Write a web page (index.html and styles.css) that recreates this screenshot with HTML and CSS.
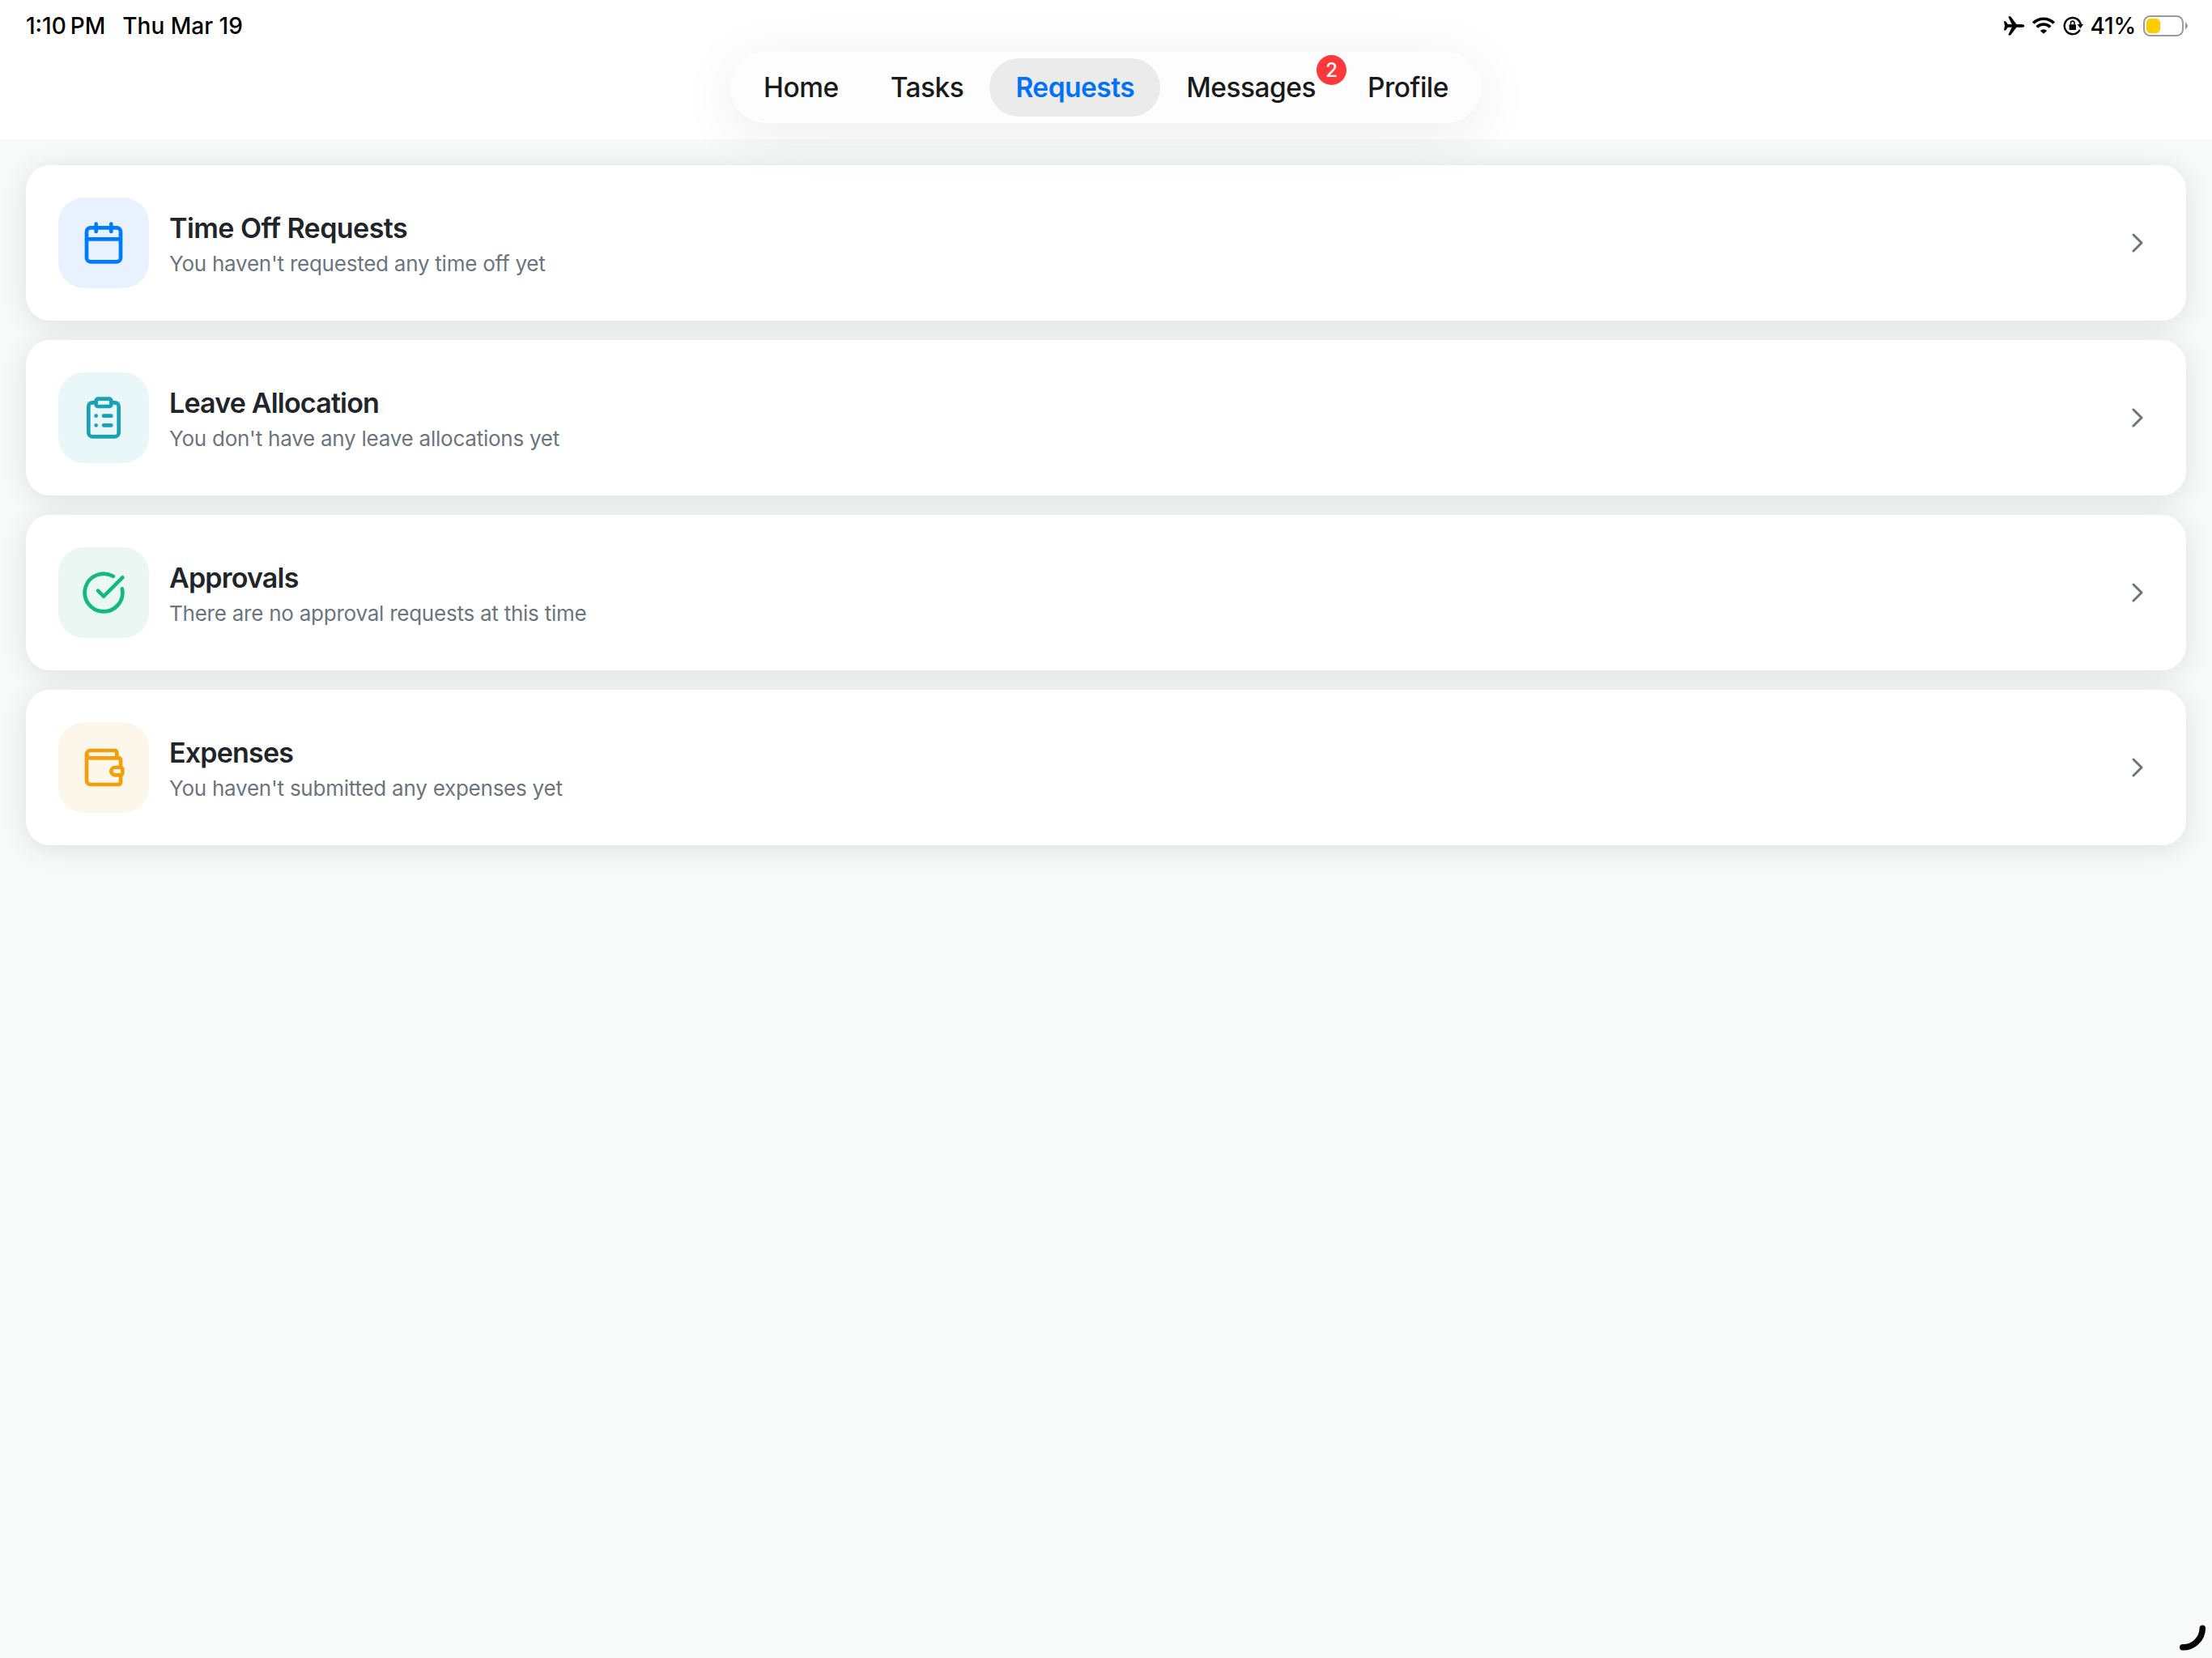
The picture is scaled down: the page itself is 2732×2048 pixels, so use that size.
FILE: index.html
```html
<!DOCTYPE html>
<html lang="en">

<head>
    <meta charset="UTF-8">
    <meta name="viewport" content="width=device-width, initial-scale=1.0">
    <title>Requests</title>
    <link rel="stylesheet" href="styles.css">
</head>

<body>

    <header class="header">
        <div class="status-bar">
            <div class="status-left">
                <span class="time">1:10<span class="ampm">PM</span></span>
                <span class="date">Thu Mar 19</span>
            </div>
            <div class="status-right">
                <svg class="plane" width="26" height="24" viewBox="0 0 26 24">
                    <path d="M0 6.2h1.6c.4 0 .7.1.9.5L4.8 10h5L5.600 1.200C5.300.6 5.600.2 6.200.2h1.300c.5 0 .8.2 1.100.6L15.600 10h6.400c1.800 0 3.400 1 3.400 1.900s-1.600 1.900-3.400 1.900h-6.400l-7 9.100c-.3.4-.6.6-1.100.6H6.200c-.6 0-.9-.4-.6-1L9.800 13.800h-5L2.500 17.100c-.2.4-.5.5-.9.5H0l1-5.700z" />
                </svg>
                <svg class="wifi" width="30" height="22" viewBox="0 0 30 22">
                    <path class="wave" d="M2.200 7.600a18 18 0 0 1 25.600 0M6.700 12.400a11.700 11.700 0 0 1 16.600 0" />
                    <path d="M15 20.700l-4.200-3.800a6 6 0 0 1 8.400 0z" />
                </svg>
                <svg class="lock" width="26" height="24" viewBox="0 0 26 24">
                    <path class="ring" d="M20.300 17.600A10.100 10.100 0 1 1 21.800 10.500" />
                    <path d="M17.600 10h7.600l-3.800 5z" />
                    <rect x="7.600" y="10.300" width="8.400" height="6.600" rx="1" />
                    <path class="shackle" d="M9.500 10.500V8.400a2.300 2.300 0 0 1 4.600 0v2.100" />
                </svg>
                <span class="percent">41%</span>
                <svg class="battery" width="56" height="26" viewBox="0 0 56 26">
                    <rect class="shell" x="1" y="1" width="48" height="24" rx="7.500" />
                    <rect class="level" x="4" y="4" width="17" height="18" rx="5" />
                    <path class="tip" d="M52 8.800c1.800.7 3 2.400 3 4.200s-1.200 3.500-3 4.200z" />
                </svg>
            </div>
        </div>

        <nav class="tabs">
            <a class="tab">Home</a>
            <a class="tab">Tasks</a>
            <a class="tab active">Requests</a>
            <a class="tab">Messages<span class="badge">2</span></a>
            <a class="tab">Profile</a>
        </nav>
    </header>

    <main class="list">
        <div class="card">
            <div class="icon blue">
                <svg viewBox="0 0 24 24">
                    <path d="M8 2v4M16 2v4M3 10h18" />
                    <rect x="3" y="4" width="18" height="18" rx="2" />
                </svg>
            </div>
            <div class="text">
                <h2 class="wide">Time Off Requests</h2>
                <p>You haven't requested any time off yet</p>
            </div>
            <svg class="chevron" viewBox="0 0 24 24"><path d="m9 18 6-6-6-6" /></svg>
        </div>

        <div class="card">
            <div class="icon teal">
                <svg viewBox="0 0 24 24">
                    <rect x="8" y="2" width="8" height="4" rx="1" />
                    <path d="M16 4h2a2 2 0 0 1 2 2v14a2 2 0 0 1-2 2H6a2 2 0 0 1-2-2V6a2 2 0 0 1 2-2h2" />
                    <path d="M12 11h4M12 16h4M8 11h.01M8 16h.01" />
                </svg>
            </div>
            <div class="text">
                <h2>Leave Allocation</h2>
                <p>You don't have any leave allocations yet</p>
            </div>
            <svg class="chevron" viewBox="0 0 24 24"><path d="m9 18 6-6-6-6" /></svg>
        </div>

        <div class="card">
            <div class="icon green">
                <svg viewBox="0 0 24 24">
                    <path d="M21.801 10A10 10 0 1 1 17 3.335" />
                    <path d="m9 11 3 3L22 4" />
                </svg>
            </div>
            <div class="text">
                <h2>Approvals</h2>
                <p>There are no approval requests at this time</p>
            </div>
            <svg class="chevron" viewBox="0 0 24 24"><path d="m9 18 6-6-6-6" /></svg>
        </div>

        <div class="card">
            <div class="icon orange">
                <svg viewBox="0 0 24 24">
                    <path d="M19 7V4a1 1 0 0 0-1-1H5a2 2 0 0 0 0 4h15a1 1 0 0 1 1 1v4h-3a2 2 0 0 0 0 4h3a1 1 0 0 0 1-1v-2a1 1 0 0 0-1-1" />
                    <path d="M3 5v14a2 2 0 0 0 2 2h15a1 1 0 0 0 1-1v-4" />
                </svg>
            </div>
            <div class="text">
                <h2>Expenses</h2>
                <p>You haven't submitted any expenses yet</p>
            </div>
            <svg class="chevron" viewBox="0 0 24 24"><path d="m9 18 6-6-6-6" /></svg>
        </div>
    </main>

    <svg class="corner" width="34" height="34" viewBox="0 0 34 34">
        <path d="M29.300 5.300A24 24 0 0 1 4.800 28.800" />
    </svg>

</body>

</html>
```
FILE: styles.css
```css
* {
    box-sizing: border-box;
}

body {
    margin: 0;
    height: 2048px;
    overflow: hidden;
    background-color: #f8faf9;
    font-family: Inter, "Liberation Sans", sans-serif;
}

.header {
    position: relative;
    z-index: 1;
    display: flex;
    flex-direction: column;
    align-items: center;
    height: 172px;
    background-color: #fff;
}

/* status bar */
.status-bar {
    display: flex;
    justify-content: space-between;
    width: 100%;
    height: 64px;
    padding: 0 29px 0 32px;
    font-size: 28px;
    font-weight: 500;
    line-height: 64px;
    color: #000;
}

.status-left,
.status-right {
    display: flex;
    align-items: center;
}

.status-left {
    gap: 21px;
}

.ampm {
    margin-left: 5px;
}

.wifi {
    margin-left: 8px;
}

.wave,
.ring,
.shackle {
    fill: none;
    stroke: #000;
}

.wave {
    stroke-width: 3.6;
}

.ring {
    stroke-width: 2.4;
    stroke-linecap: round;
}

.shackle {
    stroke-width: 1.5;
}

.lock {
    margin-left: 9px;
}

.percent {
    margin-left: 8px;
    letter-spacing: -0.2px;
}

.battery {
    margin-left: 9px;
}

.shell {
    fill: none;
    stroke: #9b9b9b;
    stroke-width: 2;
}

.level {
    fill: #ffcc00;
}

.tip {
    fill: #9b9b9b;
}

/* tab bar */
.tabs {
    display: flex;
    height: 88px;
    padding: 7px 8px;
    border: 1px solid #fff;
    border-radius: 44px;
    background-color: #fdfdfd;
    box-shadow: 0 12px 70px rgba(0, 0, 0, 0.08);
}

.tab {
    position: relative;
    padding: 0 32px;
    border-radius: 36px;
    font-size: 33.5px;
    font-weight: 500;
    line-height: 72px;
    letter-spacing: -0.5px;
    color: #1a1a1a;
}

.active {
    background-color: #ebebeb;
    font-weight: 600;
    color: #0071f8;
}

.badge {
    position: absolute;
    top: -4px;
    right: -6px;
    width: 37px;
    height: 37px;
    border-radius: 50%;
    background-color: #ff383c;
    font-size: 24px;
    line-height: 37px;
    text-align: center;
    letter-spacing: 0;
    color: #fff;
}

/* request cards */
.list {
    display: flex;
    flex-direction: column;
    gap: 24px;
    padding: 32px;
}

.card {
    display: flex;
    align-items: center;
    height: 192px;
    padding: 0 40px;
    border-radius: 30px;
    background-color: #fff;
    box-shadow: 0 4px 32px rgba(0, 0, 0, 0.11);
}

.icon {
    display: flex;
    align-items: center;
    justify-content: center;
    width: 112px;
    height: 112px;
    margin-right: 24px;
    border-radius: 32px;
}

.icon svg,
.chevron {
    fill: none;
    stroke: currentColor;
    stroke-width: 2;
    stroke-linecap: round;
    stroke-linejoin: round;
}

.icon svg {
    width: 56px;
    height: 56px;
}

.blue {
    background-color: #e8f2fe;
    color: #007bff;
}

.teal {
    background-color: #eaf7f8;
    color: #17a2b8;
}

.green {
    background-color: #eaf7f3;
    color: #14b881;
}

.orange {
    background-color: #fdf6ea;
    color: #f59e0b;
}

.text {
    flex: 1;
    padding: 3px 0 0 1px;
}

h2 {
    margin: 0;
    font-size: 34px;
    font-weight: 600;
    line-height: 44px;
    letter-spacing: -0.8px;
    color: #212529;
}

.wide {
    letter-spacing: -0.55px;
}

p {
    margin: 4px 0 0;
    font-size: 26px;
    line-height: 36px;
    letter-spacing: -0.24px;
    color: #6c757d;
}

.chevron {
    width: 40px;
    height: 40px;
    stroke-width: 1.8;
    color: #6c757d;
}

/* arc in the screen corner */
.corner {
    position: absolute;
    right: 7px;
    bottom: 8px;
    fill: none;
    stroke: #000;
    stroke-width: 7.5;
    stroke-linecap: round;
}
```
